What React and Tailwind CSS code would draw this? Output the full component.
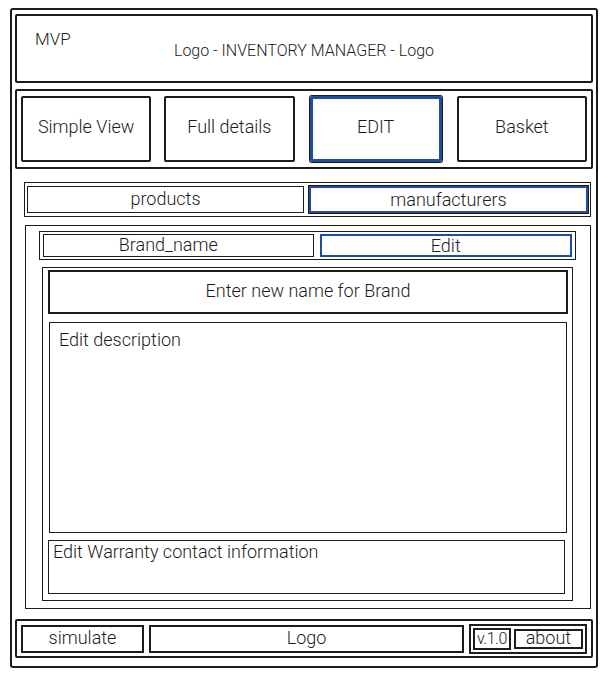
import React from 'react';

// Hand-drawn wireframe of the inventory manager edit screen
const ink = 'border-[#1c1c1c]';
const blue = 'border-[#1d4ea3]';

const NavButton = ({ label, active }) => (
  <div
    className={`flex-1 h-[66px] flex items-center justify-center border-2 rounded-[2px] pb-[5px] ${
      active ? `${blue} border-[3px] shadow-[0_0_0_1px_#1c1c1c] mx-[2px] pb-[2px]` : ink
    }`}
  >
    {label}
  </div>
);

const App = () => {
  return (
    <div
      className="w-[608px] h-[680px] bg-white text-[#1c1c1c] text-[18px] font-light pt-[8px] pl-[10px]"
      style={{ fontFamily: 'Roboto, "Liberation Sans", sans-serif' }}
    >
      <div className={`w-[588px] h-[660px] border-2 ${ink} rounded-[3px] px-[3px] pt-[4px] flex flex-col`}>
        {/* Header */}
        <div className={`h-[69px] border-2 ${ink} rounded-[2px] relative`}>
          <div className="absolute left-[18px] top-[11px] text-[17px]">MVP</div>
          <div className="text-center pt-[23px] text-[16px]">Logo - INVENTORY MANAGER - Logo</div>
        </div>

        {/* Main nav */}
        <div className={`mt-[6px] h-[80px] border-2 ${ink} rounded-[2px] flex items-center gap-[13px] px-[4px]`}>
          <NavButton label="Simple View" />
          <NavButton label="Full details" />
          <NavButton label="EDIT" active />
          <NavButton label="Basket" />
        </div>

        {/* Tabs */}
        <div className={`mt-[13px] ml-[9px] mr-[2px] h-[35px] border ${ink} flex items-center gap-[5px] px-[2px]`}>
          <div className={`flex-1 h-[27px] border ${ink} flex items-center justify-center pb-[2px]`}>products</div>
          <div className={`flex-1 h-[27px] border-2 ${blue} shadow-[0_0_0_1px_#1c1c1c] flex items-center justify-center`}>
            manufacturers
          </div>
        </div>

        {/* Content */}
        <div className={`mt-[8px] ml-[10px] mr-[2px] h-[384px] border ${ink} pl-[13px] pr-[14px] pt-[5px] flex flex-col`}>
          <div className={`h-[29px] border ${ink} flex items-center gap-[6px] px-[3px]`}>
            <div className={`flex-1 h-[23px] border ${ink} flex items-center justify-center pr-[20px] pb-[2px]`}>Brand_name</div>
            <div className={`flex-1 h-[23px] border-2 ${blue} flex items-center justify-center`}>Edit</div>
          </div>
          <div className={`mt-[7px] ml-[3px] mr-[3px] h-[334px] border ${ink} pl-[5px] pr-[4px] pt-[2px] flex flex-col`}>
            <div className={`h-[44px] border-2 ${ink} flex items-center justify-center pb-[3px]`}>Enter new name for Brand</div>
            <div className={`mt-[8px] ml-[1px] mr-[1px] h-[211px] border ${ink} px-[9px] pt-[3px]`}>Edit description</div>
            <div className={`mt-[7px] h-[54px] border ${ink} px-[4px] mr-[3px] leading-[22px]`}>Edit Warranty contact information</div>
          </div>
        </div>

        {/* Footer */}
        <div className={`mt-[10px] h-[39px] border-2 ${ink} rounded-[2px] flex items-center gap-[5px] px-[4px]`}>
          <div className={`w-[123px] h-[28px] border-2 ${ink} flex items-center justify-center pb-[2px]`}>simulate</div>
          <div className={`flex-1 h-[28px] border-2 ${ink} flex items-center justify-center pb-[3px]`}>Logo</div>
          <div className={`w-[118px] h-[30px] border-2 ${ink} flex items-center gap-[3px] px-[2px]`}>
            <div className={`h-[22px] px-[2px] border-2 ${ink} flex items-center leading-none text-[16px] tracking-[-0.5px]`}>v.1.0</div>
            <div className={`flex-1 h-[20px] border-2 ${ink} flex items-end justify-center leading-none`}>about</div>
          </div>
        </div>
      </div>
    </div>
  );
};

export default App;
